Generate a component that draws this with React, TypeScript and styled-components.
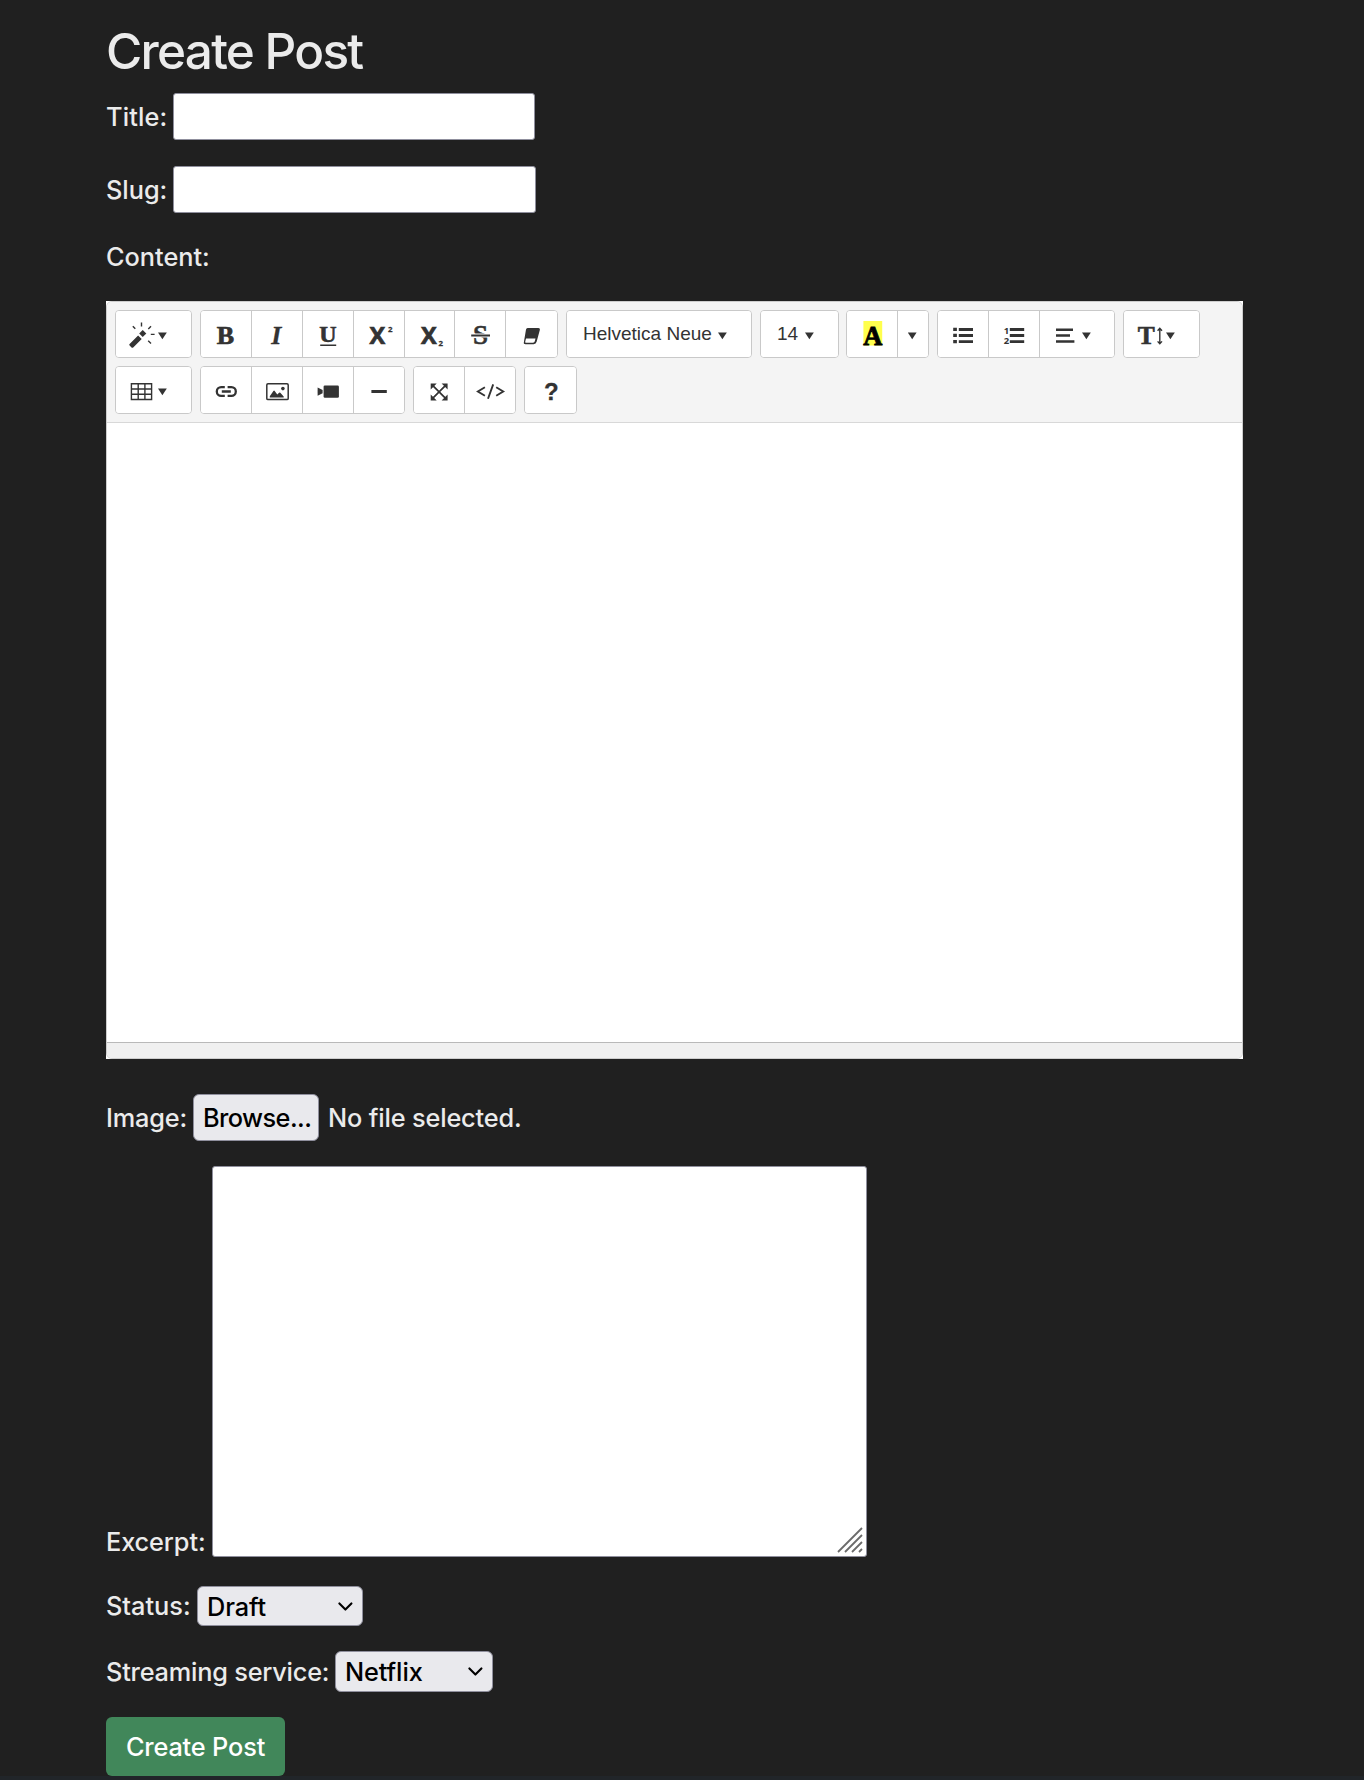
import React from "react";
import styled, { createGlobalStyle } from "styled-components";

const Global = createGlobalStyle`
  * { box-sizing: border-box; }
  html { background: #202020; }
  body { margin: 0; background: #202020; }
`;

const ui = `Inter, "Liberation Sans", sans-serif`;

const Page = styled.main`
  height: 1780px;
  padding: 21px 121px 0 106px;
  overflow: hidden;
  display: flex;
  flex-direction: column;
  border-bottom: 4px solid #212529;
  color: #ebebeb;
  font: 450 25.3px/40px ${ui};
`;

const Heading = styled.h1`
  margin: 0 0 12px;
  height: 60px;
  font-size: 49.5px;
  line-height: 60px;
  font-weight: 550;
  letter-spacing: -1.75px;
`;

const Row = styled.div<{ $h: number; $gap?: number; $end?: boolean }>`
  flex: none;
  display: flex;
  align-items: ${(p) => (p.$end ? "flex-end" : "center")};
  height: ${(p) => p.$h}px;
  margin-bottom: ${(p) => p.$gap ?? 26}px;
`;

const Label = styled.label<{ $w?: number; $ls?: number; $drop?: number }>`
  flex: none;
  width: ${(p) => (p.$w ? p.$w + "px" : "auto")};
  margin-bottom: ${(p) => -(p.$drop ?? 0)}px;
  letter-spacing: ${(p) => p.$ls ?? 0}px;
  white-space: nowrap;
`;

const TextInput = styled.input<{ $w: number }>`
  width: ${(p) => p.$w}px;
  height: 47px;
  padding: 2px 4px;
  border: 1px solid #8f8f9d;
  border-radius: 3px;
  background: #fff;
  font: inherit;
`;

const Editor = styled.section`
  flex: none;
  height: 758px;
  margin-bottom: 35px;
  background: #fff;
`;

const EditorFrame = styled.div`
  height: 100%;
  display: flex;
  flex-direction: column;
  border: 1px solid #cdcdcd;
  border-radius: 6px;
  overflow: hidden;
`;

const Toolbar = styled.div`
  height: 121px;
  padding: 8px;
  display: flex;
  flex-direction: column;
  gap: 8px;
  background: #f4f4f4;
  border-bottom: 1px solid #d8d8d8;
`;

const ToolRow = styled.div`
  display: flex;
  gap: 8px;
  height: 48px;
`;

const Group = styled.div<{ $ml?: number }>`
  display: flex;
  height: 48px;
  margin-left: ${(p) => p.$ml ?? 0}px;
  border: 1px solid #c9c9c9;
  border-radius: 4px;
  background: #fff;
  overflow: hidden;
`;

const Tool = styled.button<{ $w: number }>`
  width: ${(p) => p.$w}px;
  height: 46px;
  padding: 0;
  border: 0;
  border-right: 1px solid #c9c9c9;
  background: #fff;
  display: flex;
  color: #333;
  &:last-child { border-right: 0; }
  svg { display: block; flex: none; overflow: visible; }
`;

const ToolText = styled.span<{ $w: number }>`
  width: ${(p) => p.$w}px;
  padding-left: 16px;
  font: 400 19px/45px "Liberation Sans", Arial, sans-serif;
  text-align: left;
  white-space: nowrap;
`;

const Canvas = styled.div`
  flex: 1;
  background: #fff;
`;

const StatusBar = styled.div`
  height: 16px;
  border-top: 1px solid #b9b9b9;
  background: #f0f0f0;
`;

const Browse = styled.button`
  width: 126px;
  height: 47px;
  margin-right: 9px;
  padding: 0 0 0 9px;
  border: 1px solid #8f8f9d;
  border-radius: 6px;
  background: #e9e9ed;
  color: #000;
  font: inherit;
  text-align: left;
  letter-spacing: -0.55px;
`;

const AreaWrap = styled.div`
  position: relative;
  width: 655px;
  height: 391px;
`;

const Area = styled.textarea`
  display: block;
  width: 100%;
  height: 100%;
  border: 1px solid #8f8f9d;
  border-radius: 3px;
  background: #fff;
  resize: none;
`;

const Grip = styled.svg`
  position: absolute;
  right: 4px;
  bottom: 4px;
`;

const SelectWrap = styled.div<{ $w: number; $h: number }>`
  position: relative;
  width: ${(p) => p.$w}px;
  height: ${(p) => p.$h}px;
`;

const Select = styled.select`
  appearance: none;
  width: 100%;
  height: 100%;
  padding: 1px 9px 0;
  border: 1px solid #8f8f9d;
  border-radius: 6px;
  background: #e9e9ed;
  color: #000;
  font: 450 25.3px/38px ${ui};
  letter-spacing: -0.1px;
`;

const Chevron = styled.svg`
  position: absolute;
  right: 10px;
  top: 16px;
  pointer-events: none;
`;

const Submit = styled.button`
  flex: none;
  width: 179px;
  height: 59px;
  padding: 0;
  border: 0;
  border-radius: 6px;
  background: #41875a;
  color: #fff;
  font: inherit;
  letter-spacing: -0.15px;
  white-space: nowrap;
`;

const serif = `"Liberation Serif", "Times New Roman", serif`;
const sans = `"Open Sans", "Noto Sans", sans-serif`;

const Icon = ({ w = 50, children }: { w?: number; children: React.ReactNode }) => (
  <svg width={w} height={46} viewBox={`0 0 ${w} 46`} fill="#333" stroke="none">
    {children}
  </svg>
);

const Caret = ({ x }: { x: number }) => <path d={`M${x} 21.4h8.8l-4.4 6.8z`} />;

const Line = ({ d, w = 1.4 }: { d: string; w?: number }) => (
  <path d={d} fill="none" stroke="#333" strokeWidth={w} />
);

const Magic = () => (
  <Icon w={75}>
    <path d="M13.6 32.9l8.5-8.3 3.6 3.5-8.5 8.3q-1 .7-1.9-.2l-1.7-1.6q-.8-.9 0-1.7z" />
    <path d="M26.7 19.1l3.6 3.5-3.6 3.5-3.5-3.5z" />
    <Line d="M16.8 15.2l2.5 2.6M25.5 11.4v4.2M35 15.2l-2.7 2.8M34.8 23.4h3.8M32.2 29.8l2.8 2.6" />
    <Caret x={42} />
  </Icon>
);
const Bold = () => (
  <Icon><text x="15.8" y="33.2" fontFamily={serif} fontWeight="700" fontSize="26" stroke="#333" strokeWidth=".7">B</text></Icon>
);
const Italic = () => (
  <Icon><text x="19.2" y="33.2" fontFamily={serif} fontWeight="700" fontStyle="italic" fontSize="26" stroke="#333" strokeWidth=".3">I</text></Icon>
);
const Underline = () => (
  <Icon>
    <text x="16.2" y="31.4" fontFamily={serif} fontWeight="700" fontSize="24" stroke="#333" strokeWidth=".6">U</text>
    <path d="M17.2 33.4h16v1.5h-16z" />
  </Icon>
);
const Script = ({ sub }: { sub?: boolean }) => (
  <Icon>
    <text x={sub ? 16 : 15.6} y="33.2" fontFamily={sans} fontWeight="700" fontSize="23.5" stroke="#333" strokeWidth=".7">X</text>
    <text x={sub ? 33.6 : 34} y={sub ? 35.4 : 20.8} fontFamily={sans} fontWeight="700" fontSize="7.8" stroke="#333" strokeWidth=".3">2</text>
  </Icon>
);
const Strike = () => (
  <Icon>
    <text x="18" y="33.4" fontFamily={serif} fontWeight="700" fontSize="27" stroke="#333" strokeWidth=".5">S</text>
    <path d="M16 22.4h19.4v4H16z" fill="#fff" />
    <path d="M16.2 23.4h18.8v2.1H16.2z" />
  </Icon>
);
const Eraser = () => (
  <Icon>
    <path fillRule="evenodd" d="M21.6 17h10.8q1.9 0 1.5 1.8l-3.2 11.8q-.7 2.6-3 2.6H19.5q-2.2 0-1.6-2.2L20 18.6Q20.3 17 21.6 17zM20 27.6l-.8 3.2q-.2.9.6.9h7.3q1.2 0 1.6-1.1l.8-3z" />
  </Icon>
);
const FontColor = () => (
  <Icon>
    <path fill="#ffff4d" d="M16.4 10h18.8v24.5H16.4z" />
    <text x="16.3" y="33.8" fill="#000" stroke="#000" strokeWidth=".8" fontFamily={serif} fontWeight="700" fontSize="26.5">A</text>
  </Icon>
);
const Bullets = () => (
  <Icon>
    <path d="M15.2 16.8h3.7V20h-3.7zM15.2 22.8h3.7V26h-3.7zM15.2 29h3.7v3.2h-3.7zM20.8 17H35v2.9H20.8zM20.8 23H35v2.9H20.8zM20.8 29.2H35v2.9H20.8z" />
  </Icon>
);
const Numbers = () => (
  <Icon>
    <text x="14.8" y="23" fontFamily={sans} fontWeight="700" fontSize="9.5">1</text>
    <text x="14.8" y="33" fontFamily={sans} fontWeight="700" fontSize="9.5">2</text>
    <path d="M20.8 17h14.4v2.9H20.8zM20.8 23h14.4v2.9H20.8zM20.8 29.2h14.4v2.9H20.8z" />
  </Icon>
);
const Align = () => (
  <Icon w={74}>
    <path d="M16 17.6h17v2.5H16zM16 23.3h14v2.5H16zM16 29.2h18.4v2.5H16z" />
    <Caret x={42} />
  </Icon>
);
const LineHeight = () => (
  <Icon w={75}>
    <text x="13.8" y="33" fontFamily={serif} fontWeight="700" fontSize="25.5" stroke="#333" strokeWidth=".6">T</text>
    <Line d="M35.8 18v14M33.6 19.8l2.2-2.4 2.2 2.4M33.6 30.4l2.2 2.4 2.2-2.4" />
    <Caret x={42} />
  </Icon>
);
const Table = () => (
  <Icon w={75}>
    <Line d="M15.4 16.7h20.2v15.8H15.4zM15.4 22h20M15.4 27.2h20M22.2 17v15.4M28.9 17v15.4" />
    <Caret x={42} />
  </Icon>
);
const Link = () => (
  <Icon>
    <Line w={2.3} d="M23.8 20.1h-3.6a4.4 4.4 0 0 0 0 8.8h3.6M26.6 20.1h3.8a4.4 4.4 0 0 1 0 8.8h-3.8M20.8 24.5h9" />
  </Icon>
);
const Picture = () => (
  <Icon>
    <rect x="14.8" y="16.8" width="21.4" height="15.8" rx="1.2" fill="none" stroke="#333" strokeWidth="1.5" />
    <circle cx="30.9" cy="21.6" r="1.8" />
    <path d="M17.8 30.6v-1.3l3.6-5.3q.7-.8 1.3 0l2.6 3.6 1.8-1.8q.6-.5 1.2 0l3.4 3.6v1.2z" />
  </Icon>
);
const Video = () => (
  <Icon>
    <rect x="20.6" y="18.4" width="15.3" height="12.4" rx="1.3" />
    <path d="M14.6 20.4l5 2.6v3.2l-5 2.6z" />
  </Icon>
);
const Minus = () => (
  <Icon><path d="M17.4 23h15.4v3H17.4z" /></Icon>
);
const Expand = () => (
  <Icon>
    <Line w={1.7} d="M18.6 18.3l13 13M31.6 18.3l-13 13" />
    <path d="M16.7 16.4h6l-6 6zM33.6 16.4v6l-6-6zM16.7 33.4v-6l6 6zM33.6 33.4h-6l6-6z" />
  </Icon>
);
const Code = () => (
  <Icon>
    <Line w={1.9} d="M19.9 20.3l-7 4.2 7 4.2M31.2 20.3l7 4.2-7 4.2M28.2 17.4l-5.2 14.4" />
  </Icon>
);
const Help = () => (
  <Icon w={51}>
    <text x="18.9" y="33" fontFamily={`"Liberation Sans", sans-serif`} fontWeight="700" fontSize="24" stroke="#333" strokeWidth=".3">?</text>
  </Icon>
);

const tools = (list: Array<[string, React.ReactNode, number]>, ml = 0) => (
  <Group $ml={ml}>
    {list.map(([name, icon, w]) => (
      <Tool key={name} type="button" $w={w} aria-label={name}>{icon}</Tool>
    ))}
  </Group>
);

const Dropdown = ({ value, width, label, options, height }: {
  value: string; width: number; label: string; options: string[]; height: number;
}) => (
  <SelectWrap $w={width} $h={height}>
    <Select aria-label={label} defaultValue={value}>
      {options.map((o) => <option key={o}>{o}</option>)}
    </Select>
    <Chevron width="15" height="10" viewBox="0 0 15 10" fill="none" stroke="#000" strokeWidth="2.1" strokeLinecap="round" strokeLinejoin="round">
      <path d="M1.4 1.4l6 6.2 6-6.2" />
    </Chevron>
  </SelectWrap>
);

export default function App() {
  return (
    <>
      <Global />
      <Page>
        <Heading>Create Post</Heading>
        <Row $h={47}>
          <Label $w={67} $ls={0.15}>Title:</Label>
          <TextInput aria-label="Title" $w={362} />
        </Row>
        <Row $h={47} $gap={24}>
          <Label $w={67}>Slug:</Label>
          <TextInput aria-label="Slug" $w={363} />
        </Row>
        <Row $h={40} $gap={24}>
          <Label>Content:</Label>
        </Row>
        <Editor>
          <EditorFrame>
            <Toolbar>
              <ToolRow>
                {tools([["Style", <Magic />, 75]])}
                {tools([
                  ["Bold", <Bold />, 51], ["Italic", <Italic />, 51], ["Underline", <Underline />, 51],
                  ["Superscript", <Script />, 51], ["Subscript", <Script sub />, 50],
                  ["Strikethrough", <Strike />, 51], ["Clear", <Eraser />, 51],
                ])}
                {tools([["Font family", <><ToolText $w={151}>Helvetica Neue</ToolText><Icon w={33}><Caret x={0} /></Icon></>, 184]])}
                {tools([["Font size", <><ToolText $w={44}>14</ToolText><Icon w={33}><Caret x={0} /></Icon></>, 77]])}
                {tools([["Color", <FontColor />, 51], ["More colors", <Icon w={30}><Caret x={9.8} /></Icon>, 30]], -1)}
                {tools([["Bullets", <Bullets />, 51], ["Numbers", <Numbers />, 51], ["Paragraph", <Align />, 74]])}
                {tools([["Line height", <LineHeight />, 75]])}
              </ToolRow>
              <ToolRow>
                {tools([["Table", <Table />, 75]])}
                {tools([["Link", <Link />, 51], ["Picture", <Picture />, 51], ["Video", <Video />, 51], ["Rule", <Minus />, 50]])}
                {tools([["Full screen", <Expand />, 51], ["Code view", <Code />, 50]])}
                {tools([["Help", <Help />, 51]])}
              </ToolRow>
            </Toolbar>
            <Canvas />
            <StatusBar />
          </EditorFrame>
        </Editor>
        <Row $h={47} $gap={25}>
          <Label $w={87} $ls={-0.15}>Image:</Label>
          <Browse type="button">Browse...</Browse>
          <Label $ls={-0.15}>No file selected.</Label>
        </Row>
        <Row $h={391} $gap={29} $end>
          <Label $w={106} $ls={-0.1} $drop={5}>Excerpt:</Label>
          <AreaWrap>
            <Area aria-label="Excerpt" />
            <Grip width="26" height="26" viewBox="0 0 26 26" fill="none" stroke="#6b6b6b" strokeWidth="1.8">
              <path d="M1 25L25 1M8 25L25 8M15 25L25 15M22 25L25 22" />
            </Grip>
          </AreaWrap>
        </Row>
        <Row $h={40} $gap={25}>
          <Label $w={91} $drop={-1}>Status:</Label>
          <Dropdown label="Status" value="Draft" width={166} height={40} options={["Draft", "Published"]} />
        </Row>
        <Row $h={41} $gap={25}>
          <Label $w={229} $ls={-0.2}>Streaming service:</Label>
          <Dropdown label="Streaming service" value="Netflix" width={158} height={41} options={["Netflix", "Disney+"]} />
        </Row>
        <Submit type="submit">Create Post</Submit>
      </Page>
    </>
  );
}
